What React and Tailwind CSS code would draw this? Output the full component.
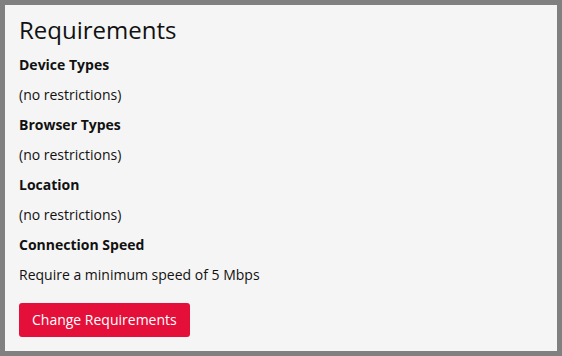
const sections = [
  { title: "Device Types", value: "(no restrictions)" },
  { title: "Browser Types", value: "(no restrictions)" },
  { title: "Location", value: "(no restrictions)" },
  { title: "Connection Speed", value: "Require a minimum speed of 5 Mbps" },
];

export default function App() {
  return (
    <div className="w-[562px] h-[356px] bg-[#808080] p-[5px] font-['Open_Sans',sans-serif] text-[#111]">
      <div className="h-full bg-[#f5f5f5] px-[14px] pt-[10px]">
        <h1 className="text-[24px] leading-[30px] font-normal">Requirements</h1>
        <div className="mt-[5px]">
          {sections.map((s) => (
            <div key={s.title}>
              <div className="text-sm font-bold leading-[30px]">{s.title}</div>
              <div className="text-sm leading-[30px]">{s.value}</div>
            </div>
          ))}
        </div>
        <button className="mt-[13px] h-[34px] px-[13px] rounded-[3px] bg-[#e4103a] text-white text-sm">
          Change Requirements
        </button>
      </div>
    </div>
  );
}
